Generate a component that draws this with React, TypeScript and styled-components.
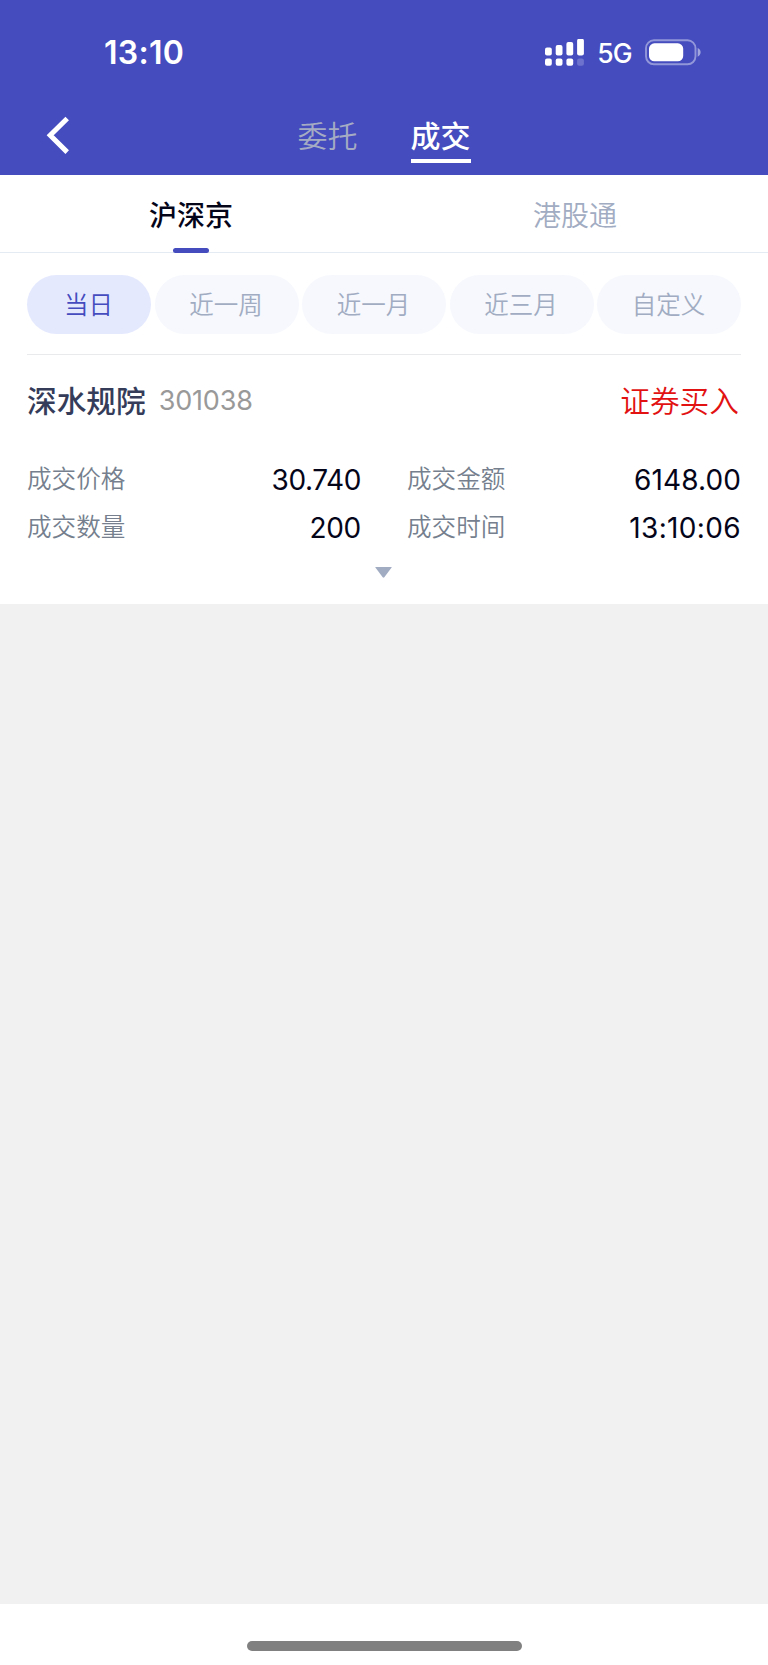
import React from "react";
import styled, { createGlobalStyle } from "styled-components";

const GlobalStyle = createGlobalStyle`
  * { box-sizing: border-box; }
  html, body { margin: 0; padding: 0; background: #fff; }
  body {
    font-family: Inter, "Noto Sans CJK SC", sans-serif;
    color: #05051a;
    overflow: hidden;
  }
`;

const Screen = styled.div`
  display: flex;
  flex-direction: column;
  width: 768px;
  height: 1665px;
  background: #fff;
`;

const Header = styled.header`
  height: 174.5px;
  flex: none;
  background: #444cbe;
  color: #fff;
`;

const StatusBar = styled.div`
  display: flex;
  align-items: center;
  justify-content: space-between;
  height: 105px;
  padding: 0 67px 0 104px;
`;

const Clock = styled.span`
  font-size: 32px;
  font-weight: 600;
  line-height: 40px;
  letter-spacing: 0.3px;
`;

const StatusIcons = styled.div`
  display: flex;
  align-items: center;
  height: 28px;
`;

const Network = styled.span`
  font-size: 26.5px;
  font-weight: 500;
  line-height: 28px;
  letter-spacing: -1px;
  margin: 1px 13.5px 0 13px;
`;

const NavBar = styled.nav`
  display: grid;
  grid-template-columns: 1fr auto 1fr;
  height: 69px;
  padding: 0 45px;
`;

const BackButton = styled.button`
  display: flex;
  align-items: flex-start;
  justify-self: start;
  padding: 10px 0 0;
  border: 0;
  background: none;
`;

const NavTabs = styled.div`
  display: flex;
  gap: 53px;
  padding-top: 9px;
`;

const NavTab = styled.span<{ $active?: boolean }>`
  height: 49px;
  font-size: 30px;
  line-height: 44px;
  font-weight: ${(p) => (p.$active ? 500 : 350)};
  color: ${(p) => (p.$active ? "#fff" : "#a4abc3")};
  border-bottom: 4px solid ${(p) => (p.$active ? "#fff" : "transparent")};
`;

const MarketTabs = styled.div`
  display: flex;
  flex: none;
  height: 78.5px;
  border-bottom: 1px solid #e4ebf3;
`;

const MarketTab = styled.div<{ $active?: boolean }>`
  display: flex;
  flex: 1;
  flex-direction: column;
  align-items: center;
  justify-content: space-between;
  padding: 21px 2px 0 0;
  font-size: 28px;
  line-height: 40px;
  font-weight: ${(p) => (p.$active ? 500 : 350)};
  color: ${(p) => (p.$active ? "#05051a" : "#a1acc2")};
`;

const Indicator = styled.i`
  width: 36px;
  height: 5px;
  margin-bottom: -1px;
  border-radius: 3px;
  background: #444cbe;
`;

const Filters = styled.div`
  display: flex;
  flex: none;
  gap: 3.5px;
  height: 101.5px;
  margin: 0 27px;
  padding-top: 22px;
  border-bottom: 1px solid #e9eaeb;
`;

const Pill = styled.button<{ $active?: boolean }>`
  flex: ${(p) => (p.$active ? "0 0 124px" : "1")};
  height: 58.5px;
  padding: 0 1px 1px 0;
  border: 0;
  border-radius: 30px;
  font-family: inherit;
  font-size: 24.5px;
  font-weight: 350;
  color: ${(p) => (p.$active ? "#444cbe" : "#a1acc2")};
  background: ${(p) => (p.$active ? "#e5e9fe" : "#f6f8fd")};
`;

const Deal = styled.article`
  flex: none;
  height: 249.5px;
  padding: 24px 27px 0;
`;

const DealHead = styled.div`
  display: flex;
  align-items: center;
  height: 44px;
`;

const StockName = styled.strong`
  font-size: 29.7px;
  line-height: 44px;
  font-weight: 500;
  color: #353c5a;
`;

const StockCode = styled.span`
  margin: 0 0 0 13px;
  font-size: 27px;
  line-height: 40px;
  letter-spacing: -0.2px;
  color: #999;
`;

const Side = styled.span`
  margin: 0 2px 0 auto;
  font-size: 29.7px;
  line-height: 44px;
  font-weight: 350;
  color: #e21212;
`;

const Fields = styled.dl`
  display: grid;
  grid-template-columns: 334px 334px;
  column-gap: 46px;
  margin: 32px 0 0;
`;

const Field = styled.div`
  display: flex;
  justify-content: space-between;
  height: 48px;
`;

const Label = styled.dt`
  padding-top: 2px;
  font-size: 24.6px;
  line-height: 44px;
  font-weight: 350;
  color: #757f8e;
`;

const Value = styled.dd<{ $tracking: number }>`
  margin: 0;
  padding-top: 2px;
  font-size: 28px;
  line-height: 46px;
  letter-spacing: ${(p) => p.$tracking}px;
  color: #05051a;
`;

const Expand = styled.div`
  display: flex;
  justify-content: center;
  padding: 16px 1px 0 0;
`;

const Blank = styled.main`
  flex: 1;
  background: #f1f1f1;
`;

const HomeArea = styled.footer`
  display: flex;
  justify-content: center;
  flex: none;
  height: 61px;
  padding-top: 37px;
`;

const HomeBar = styled.div`
  width: 275px;
  height: 9.5px;
  border-radius: 5px;
  background: #808080;
`;

const bars = [
  { x: 0, y: 9, h: 8 },
  { x: 10.7, y: 6.5, h: 10.5 },
  { x: 21.4, y: 3.5, h: 13.5 },
  { x: 32.1, y: 0.3, h: 16.7 },
];

const SignalIcon = () => (
  <svg width="39" height="28" viewBox="0 0.6 39 28" fill="#fff">
    {bars.map((b, i) => (
      <g key={b.x}>
        <rect x={b.x} y={b.y} width="6.8" height={b.h} rx="2" />
        <rect x={b.x} y="20" width="6.8" height="7.4" rx="2" opacity={i === 3 ? 0.22 : 1} />
      </g>
    ))}
  </svg>
);

const BatteryIcon = () => (
  <svg width="56" height="26" viewBox="0 0.7 56 26" overflow="visible">
    <rect x="1" y="1" width="49.5" height="24" rx="8" fill="none" stroke="#fff" strokeOpacity="0.42" strokeWidth="1.9" />
    <rect x="4" y="4" width="34.2" height="18" rx="5.4" fill="#fff" />
    <path d="M52.7 8.8c3.9 1.6 3.9 7 0 8.6z" fill="#fff" fillOpacity="0.5" />
  </svg>
);

const BackIcon = () => (
  <svg width="26" height="40" viewBox="0 0 26 40" fill="none" stroke="#fff" strokeWidth="5">
    <path d="M22.2 3.5 5.2 20.3l17 16.8" />
  </svg>
);

const periods = ["当日", "近一周", "近一月", "近三月", "自定义"];

const fields = [
  { label: "成交价格", value: "30.740", tracking: -0.4 },
  { label: "成交金额", value: "6148.00", tracking: 0.1 },
  { label: "成交数量", value: "200", tracking: -0.3 },
  { label: "成交时间", value: "13:10:06", tracking: 0.35 },
];

export default function App() {
  return (
    <Screen>
      <GlobalStyle />
      <Header>
        <StatusBar>
          <Clock>13:10</Clock>
          <StatusIcons>
            <SignalIcon />
            <Network>5G</Network>
            <BatteryIcon />
          </StatusIcons>
        </StatusBar>
        <NavBar>
          <BackButton aria-label="返回">
            <BackIcon />
          </BackButton>
          <NavTabs>
            <NavTab>委托</NavTab>
            <NavTab $active>成交</NavTab>
          </NavTabs>
        </NavBar>
      </Header>
      <MarketTabs>
        <MarketTab $active>
          沪深京
          <Indicator />
        </MarketTab>
        <MarketTab>港股通</MarketTab>
      </MarketTabs>
      <Filters>
        {periods.map((p, i) => (
          <Pill key={p} $active={i === 0}>
            {p}
          </Pill>
        ))}
      </Filters>
      <Deal>
        <DealHead>
          <StockName>深水规院</StockName>
          <StockCode>301038</StockCode>
          <Side>证券买入</Side>
        </DealHead>
        <Fields>
          {fields.map((f) => (
            <Field key={f.label}>
              <Label>{f.label}</Label>
              <Value $tracking={f.tracking}>{f.value}</Value>
            </Field>
          ))}
        </Fields>
        <Expand>
          <svg width="17" height="11" viewBox="0 0 17 11" fill="#a1acc2">
            <path d="M.7 0h15.6q.7 0 .3.6L9.3 10.2q-.8.9-1.6 0L.4.6Q0 0 .7 0z" />
          </svg>
        </Expand>
      </Deal>
      <Blank />
      <HomeArea>
        <HomeBar />
      </HomeArea>
    </Screen>
  );
}
